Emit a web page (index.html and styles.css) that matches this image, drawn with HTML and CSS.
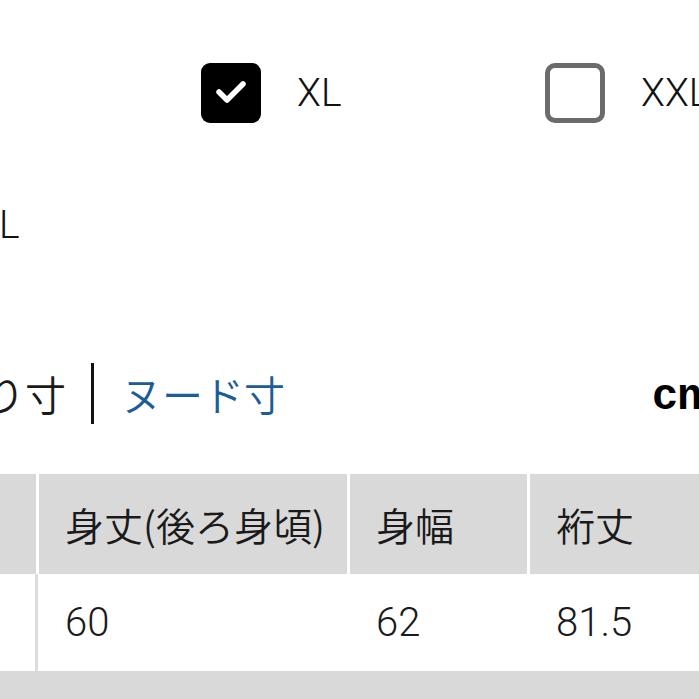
FILE: index.html
```html
<!DOCTYPE html>
<html lang="ja">
<head>
<meta charset="utf-8">
<link rel="stylesheet" href="styles.css">
</head>
<body>
<div class="page">
  <div class="sizes sizes-first">
    <div class="size-option">
      <span class="box box-checked">
        <svg viewBox="0 0 60 60" width="60" height="60"><polyline points="18,29 26,37 42,21" fill="none" stroke="#fff" stroke-width="5.5" stroke-linecap="round" stroke-linejoin="round"/></svg>
      </span>
      <span class="size-label">XL</span>
    </div>
    <div class="size-option">
      <span class="box box-empty"></span>
      <span class="size-label">XXL</span>
    </div>
  </div>
  <div class="sizes sizes-second">
    <span class="size-label">L</span>
  </div>
  <div class="tabs">
    <div class="tab-left"><span class="tab tab-active">仕上がり寸</span></div>
    <span class="tab-divider"></span>
    <span class="tab tab-link">ヌード寸</span>
    <span class="unit">cm</span>
  </div>
  <div class="table">
    <div class="row row-head">
      <div class="cell"></div>
      <div class="cell">身丈(後ろ身頃)</div>
      <div class="cell">身幅</div>
      <div class="cell">裄丈</div>
    </div>
    <div class="row row-body">
      <div class="cell cell-first"></div>
      <div class="cell">60</div>
      <div class="cell">62</div>
      <div class="cell">81.5</div>
    </div>
    <div class="row row-head row-next">
      <div class="cell"></div>
      <div class="cell"></div>
      <div class="cell"></div>
      <div class="cell"></div>
    </div>
  </div>
</div>
</body>
</html>
```
FILE: styles.css
```css
html, body {
  margin: 0;
  padding: 0;
  width: 699px;
  height: 699px;
  overflow: hidden;
  background: #fff;
}
.page {
  font-family: Roboto, "Noto Sans CJK JP", sans-serif;
  color: #1a1a1a;
  width: 760px;
}
.sizes {
  display: flex;
  align-items: center;
  height: 60px;
}
.sizes-first {
  margin-top: 63px;
  padding-left: 201px;
}
.sizes-second {
  margin-top: 72px;
  padding-left: 0;
}
.size-option {
  display: flex;
  align-items: center;
  gap: 36px;
  width: 344px;
  flex: none;
}
.box {
  box-sizing: border-box;
  width: 60px;
  height: 60px;
  flex: none;
  display: block;
}
.box svg { display: block; }
.box-checked {
  background: #000;
  border-radius: 9px;
}
.box-empty {
  border: 5px solid #6b6b6b;
  border-radius: 10px;
}
.size-label {
  font-family: Roboto, sans-serif;
  font-weight: 300;
  font-size: 39px;
  line-height: 1;
  color: #111;
}
.sizes-second .size-label {
  margin-left: -1px;
}
.tabs {
  display: flex;
  align-items: center;
  height: 61px;
  margin-top: 108px;
}
.tab-left {
  width: 66px;
  display: flex;
  justify-content: flex-end;
  flex: none;
}
.tab {
  font-family: "Noto Sans CJK JP", sans-serif;
  font-weight: 350;
  font-size: 41px;
  line-height: 1;
  white-space: nowrap;
}
.tab-active { color: #1a1a1a; }
.tab-link {
  color: #1b5d97;
  margin-left: 27px;
}
.tab-divider {
  width: 3px;
  height: 61px;
  background: #111;
  margin-left: 25px;
  flex: none;
}
.unit {
  margin-left: auto;
  margin-right: 44px;
  font-family: "Liberation Sans", Arial, sans-serif;
  font-weight: 700;
  font-size: 44px;
  line-height: 1;
  color: #000;
}
.table {
  margin-top: 50px;
}
.row {
  display: grid;
  grid-template-columns: 36px 308px 177px 240px;
  column-gap: 3px;
}
.cell {
  font-family: Roboto, "Noto Sans CJK JP", sans-serif;
  font-size: 39px;
  display: flex;
  align-items: center;
  padding-left: 26px;
  white-space: nowrap;
  box-sizing: border-box;
}
.row-head {
  height: 100px;
}
.row-head .cell {
  background: #d9d9d9;
  font-family: "Noto Sans CJK JP", sans-serif;
  font-weight: 350;
  color: #1a1a1a;
}
.row-body {
  height: 97px;
  column-gap: 0;
  grid-template-columns: 39px 311px 180px 240px;
}
.row-body .cell {
  font-weight: 300;
  font-size: 40px;
  color: #1a1a1a;
}
.row-body .cell-first {
  border-right: 3px solid #dcdcdc;
  width: 38px;
}
.row-next {
  column-gap: 0;
  grid-template-columns: 39px 311px 180px 240px;
}
```
